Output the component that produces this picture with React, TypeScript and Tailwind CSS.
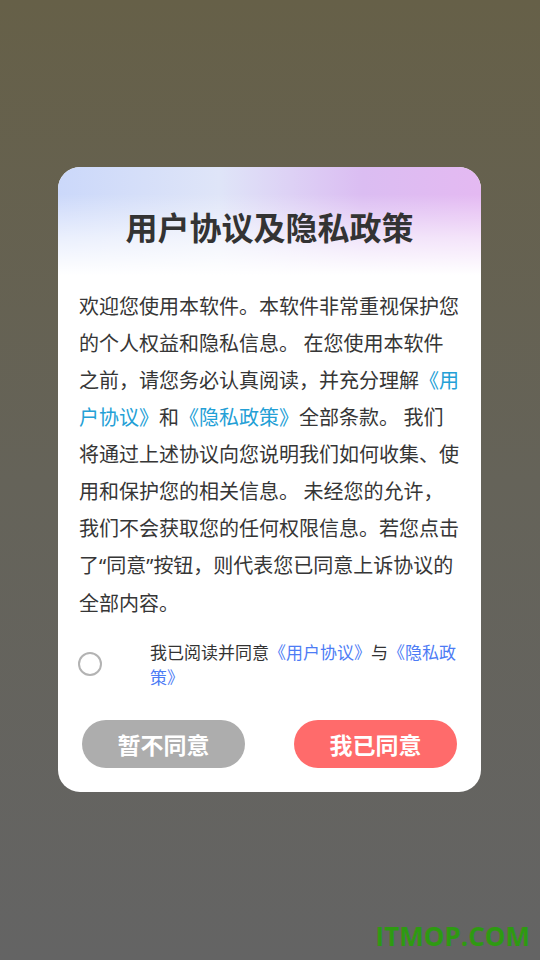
export default function App() {
  return (
    <div
      className="relative w-[540px] h-[960px] overflow-hidden bg-[linear-gradient(to_bottom,#666048,#656359_50%,#646464)] pt-[167px]"
      style={{ fontFamily: '"Noto Sans CJK SC", "Noto Sans", sans-serif' }}
    >
      {/* Dialog card */}
      <div className="ml-[58px] w-[423px] overflow-hidden rounded-[22px] bg-white pb-[24px]">
        {/* Gradient header */}
        <div className="relative h-[108px] bg-[linear-gradient(to_right,#cbd8fa,#dfe5f8_38%,#dbbdf2_72%,#e4b9f2)]">
          <div className="absolute inset-0 bg-[linear-gradient(to_bottom,rgba(255,255,255,0)_25%,rgba(255,255,255,0.6)_65%,#ffffff)]" />
          <h1 className="relative pt-[39px] text-center text-[32px] font-bold leading-[40px] text-[#333333]">
            用户协议及隐私政策
          </h1>
        </div>

        {/* Body text */}
        <p className="mt-[12px] px-[21px] text-[20px] leading-[37px] text-[#363636]">
          欢迎您使用本软件。本软件非常重视保护您的个人权益和隐私信息。 在您使用本软件之前，请您务必认真阅读，并充分理解
          <span className="text-[#24a0d6]">《用户协议》</span>和
          <span className="text-[#24a0d6]">《隐私政策》</span>
          全部条款。 我们将通过上述协议向您说明我们如何收集、使用和保护您的相关信息。 未经您的允许，我们不会获取您的任何权限信息。若您点击了
          <span style={{ fontFamily: '"Noto Sans", sans-serif' }}>“</span>同意
          <span style={{ fontFamily: '"Noto Sans", sans-serif' }}>”</span>
          按钮，则代表您已同意上诉协议的全部内容。
        </p>

        {/* Agreement checkbox */}
        <div className="mt-[18px] flex items-center pl-[20px]">
          <div className="h-[24px] w-[24px] shrink-0 rounded-full border-2 border-[#b3b3b3]" />
          <p className="ml-[48px] w-[310px] text-[17px] leading-[25px] text-[#333333]">
            我已阅读并同意<span className="text-[#4d7cf5]">《用户协议》</span>与
            <span className="text-[#4d7cf5]">《隐私政策》</span>
          </p>
        </div>

        {/* Buttons */}
        <div className="mt-[31px] flex justify-between px-[24px]">
          <button className="h-[48px] w-[163px] rounded-full bg-[#adadad] text-[23px] font-bold text-white">
            暂不同意
          </button>
          <button className="h-[48px] w-[163px] rounded-full bg-[#ff6b6b] text-[23px] font-bold text-white">
            我已同意
          </button>
        </div>
      </div>

      {/* Watermark */}
      <div
        className="absolute bottom-[11px] right-[10px] text-[26px] font-bold leading-none text-[#2e9a12]"
        style={{ fontFamily: '"Open Sans", sans-serif' }}
      >
        ITMOP.COM
      </div>
    </div>
  );
}
